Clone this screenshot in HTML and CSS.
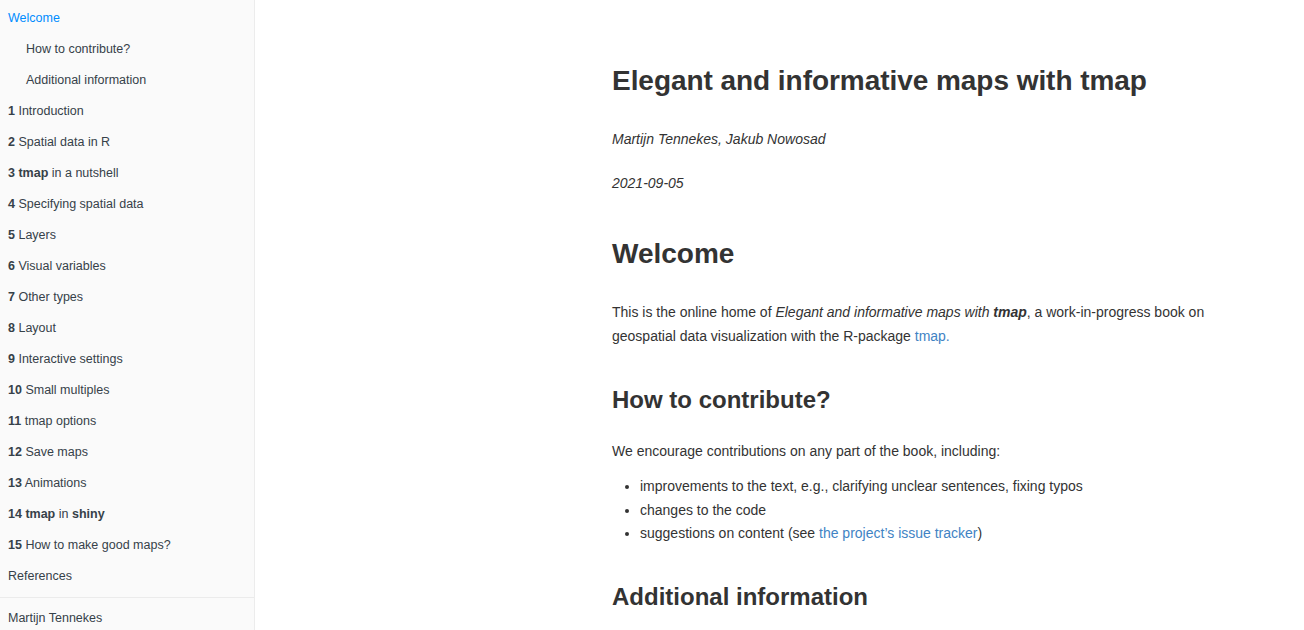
FILE: index.html
```html
<!DOCTYPE html>
<html lang="en">
<head>
<meta charset="utf-8">
<title>Elegant and informative maps with tmap</title>
<link rel="stylesheet" href="styles.css">
</head>
<body>
<div class="book">
  <nav class="summary">
    <ul class="toc">
      <li class="item active">Welcome</li>
      <li class="item sub">How to contribute?</li>
      <li class="item sub">Additional information</li>
      <li class="item"><b>1</b> Introduction</li>
      <li class="item"><b>2</b> Spatial data in R</li>
      <li class="item"><b>3</b> <b>tmap</b> in a nutshell</li>
      <li class="item"><b>4</b> Specifying spatial data</li>
      <li class="item"><b>5</b> Layers</li>
      <li class="item"><b>6</b> Visual variables</li>
      <li class="item"><b>7</b> Other types</li>
      <li class="item"><b>8</b> Layout</li>
      <li class="item"><b>9</b> Interactive settings</li>
      <li class="item"><b>10</b> Small multiples</li>
      <li class="item"><b>11</b> tmap options</li>
      <li class="item"><b>12</b> Save maps</li>
      <li class="item"><b>13</b> Animations</li>
      <li class="item"><b>14</b> <b>tmap</b> in <b>shiny</b></li>
      <li class="item"><b>15</b> How to make good maps?</li>
      <li class="item">References</li>
      <li class="divider"></li>
      <li class="item">Martijn Tennekes</li>
    </ul>
  </nav>
  <main class="body">
    <div class="inner">
      <h1 class="title">Elegant and informative maps with tmap</h1>
      <p class="author"><em>Martijn Tennekes, Jakub Nowosad</em></p>
      <p class="date"><em>2021-09-05</em></p>
      <h1 class="h-welcome">Welcome</h1>
      <p class="intro">This is the online home of <em>Elegant and informative maps with <strong>tmap</strong></em>, a work-in-progress book on geospatial data visualization with the R-package <a href="#" class="link">tmap.</a></p>
      <h2 class="h-contrib">How to contribute?</h2>
      <p class="encourage">We encourage contributions on any part of the book, including:</p>
      <ul class="bullets">
        <li>improvements to the text, e.g., clarifying unclear sentences, fixing typos</li>
        <li>changes to the code</li>
        <li>suggestions on content (see <a href="#" class="link">the project’s issue tracker</a>)</li>
      </ul>
      <h2 class="h-add">Additional information</h2>
    </div>
  </main>
</div>
</body>
</html>
```
FILE: styles.css
```css
html, body {
  margin: 0;
  padding: 0;
  height: 100%;
  overflow: hidden;
  background: #ffffff;
}

body {
  font-family: "Liberation Sans", Arial, Helvetica, sans-serif;
  color: #333333;
}

.book {
  display: flex;
  height: 630px;
}

.summary {
  width: 254px;
  flex: 0 0 254px;
  background: #fafafa;
  border-right: 1px solid #ececec;
  height: 100%;
}

.toc {
  list-style: none;
  margin: 0;
  padding: 2.5px 0 0 0;
}

.item {
  font-size: 12.5px;
  line-height: 31px;
  height: 31px;
  padding-left: 8px;
  color: #364149;
  white-space: nowrap;
}

.item b {
  font-weight: bold;
}

.item.active {
  color: #008cff;
}

.item.sub {
  padding-left: 26px;
}

.divider {
  height: 1px;
  background: #ebebeb;
  margin: 5.5px 0 4.5px 0;
}

.body {
  flex: 1;
  padding-left: 357px;
}

.inner {
  width: 630px;
  padding-top: 64px;
}

.inner h1,
.inner h2,
.inner p,
.inner ul {
  margin: 0;
}

.title {
  font-size: 28px;
  line-height: 34px;
  font-weight: bold;
  letter-spacing: -0.05px;
}

.author,
.date,
.intro,
.encourage {
  font-size: 14px;
  line-height: 24px;
}

.author {
  margin-top: 29px !important;
}

.date {
  margin-top: 20px !important;
}

.h-welcome {
  font-size: 28px;
  line-height: 34px;
  font-weight: bold;
  margin-top: 42px !important;
}

.intro {
  margin-top: 29px !important;
}

.h-contrib,
.h-add {
  font-size: 24px;
  line-height: 29px;
  font-weight: bold;
}

.h-contrib {
  margin-top: 36.5px !important;
}

.encourage {
  margin-top: 25.5px !important;
}

.bullets {
  margin-top: 12px !important;
  padding-left: 28px;
  font-size: 14px;
  line-height: 23.5px;
}

.h-add {
  margin-top: 36px !important;
}

.link {
  color: #4183c4;
  text-decoration: none;
}
```
